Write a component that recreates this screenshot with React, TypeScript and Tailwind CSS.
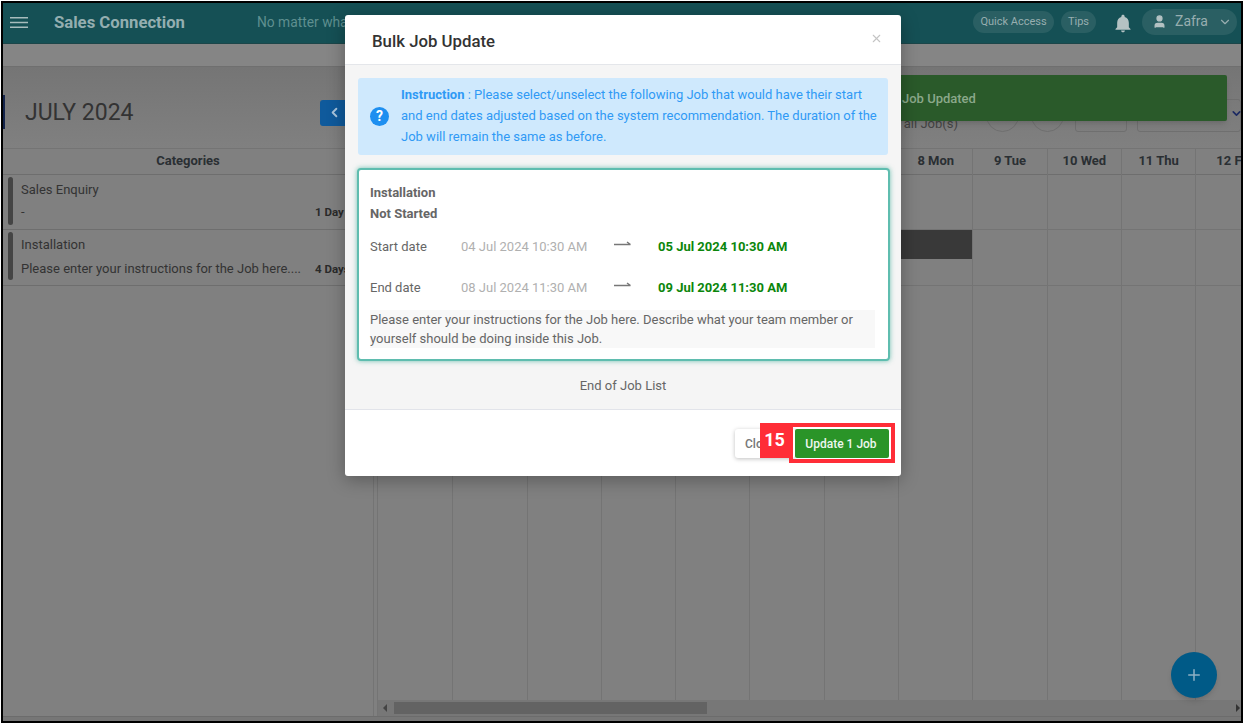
import { ChevronDown, ChevronLeft, Plus, User, X } from "lucide-react"

const days = ["1 Mon", "2 Tue", "3 Wed", "4 Thu", "5 Fri", "6 Sat", "7 Sun", "8 Mon", "9 Tue", "10 Wed", "11 Thu", "12 Fri"]

const Bell = () => (
    <svg viewBox="0 0 24 24" className="w-[20px] h-[22px] fill-[#b4c2c3]">
        <path d="M12 22c1.300 0 2.300-1 2.300-2.200H9.700C9.700 21 10.700 22 12 22zm7-6v-5.500c0-3.400-1.900-6.200-5-7V2.800C14 1.800 13.100 1 12 1s-2 .8-2 1.800v.7c-3.100.8-5 3.600-5 7V16l-2 2v1h18v-1l-2-2z" />
    </svg>
)

const CategoryRow = ({ title, text, days, h, gap }: { title: string; text: string; days: string; h: string; gap: string }) => (
    <div className={`${h} flex border-b border-[#6e6e6e] pl-[5px] pt-[2px]`}>
        <div className="w-[5px] h-[48px] rounded-[3px] bg-[#454545]" />
        <div className="flex-1 pl-[8px] pr-[26px] pt-[3px] text-[13px] text-[#333]">
            <div className="leading-[20px]">{title}</div>
            <div className={`flex justify-between items-center leading-[20px] ${gap}`}>
                <span>{text}</span>
                <span className="w-[32px] text-[11.500px] font-bold text-[#2a2a2a] whitespace-nowrap">{days}</span>
            </div>
        </div>
    </div>
)

const DateRow = ({ label, from, to, h }: { label: string; from: string; to: string; h: string }) => (
    <div className={`${h} flex items-center text-[13px]`}>
        <span className="w-[91px] text-[#666]">{label}</span>
        <span className="w-[153px] text-[#b0b0b0]">{from}</span>
        <span className="w-[44px]">
            <svg viewBox="0 0 18 8" className="w-[18px] h-[8px] -translate-y-[3px] stroke-[#777] fill-none">
                <path d="M0 4.500h16.500M13 2l3.500 2.500" strokeWidth="1.400" />
            </svg>
        </span>
        <span className="font-bold text-[#0b860b]">{to}</span>
    </div>
)

export default function App() {
    return (
        <div className="relative w-[1246px] h-[726px] overflow-hidden bg-white font-['Roboto',sans-serif]">
            <div className="m-[1px] w-[1242px] h-[722px] border-2 border-black bg-[#808080] flex flex-col overflow-hidden">
                {/* HEADER */}
                <header className="h-[41px] shrink-0 bg-[#155055] border-b border-[#1c4649] flex items-center pl-[7px] pr-[4px]">
                    <svg viewBox="0 0 18 11" className="w-[18px] h-[11px] -mt-[2px] stroke-[#a7bcbd]">
                        <path d="M0 .75h18M0 5.500h18M0 10.250h18" strokeWidth="1.500" />
                    </svg>
                    <span className="ml-[26px] text-[16.700px] font-bold text-[#94aeb0] -mt-px">Sales Connection</span>
                    <span className="ml-[72px] text-[13.800px] text-[#5f8f90] whitespace-nowrap -mt-px">No matter what happens</span>
                    <div className="ml-auto flex items-center">
                        <span className="-mt-[2px] h-[22px] w-[81px] rounded-full bg-[#2a5f63] text-[11px] text-[#98aeb0] flex items-center justify-center">Quick Access</span>
                        <span className="-mt-[2px] ml-[7px] h-[22px] w-[35px] rounded-full bg-[#2a5f63] text-[11px] text-[#98aeb0] flex items-center justify-center">Tips</span>
                        <span className="ml-[17px] mt-px"><Bell /></span>
                        <span className="-mt-[3px] ml-[9px] h-[26px] w-[95px] rounded-full bg-[#2a5f63] text-[14px] text-[#98aeb0] flex items-center pl-[10px] gap-[8px]">
                            <User className="w-[15px] h-[15px] fill-[#b4c2c3] text-[#b4c2c3]" />
                            Zafra
                            <ChevronDown className="w-[14px] h-[14px] ml-[2px]" />
                        </span>
                    </div>
                </header>

                <div className="h-[23px] shrink-0 bg-[#858585] border-b border-[#6f6f6f]" />

                {/* TOOLBAR */}
                <div className="relative h-[82px] shrink-0 bg-gradient-to-b from-[#757575] to-[#808080] border-b border-[#747474] flex items-center">
                    <div className="w-[2px] h-[34px] mt-[8px] bg-[#12224a]" />
                    <span className="ml-[20px] mt-[12px] text-[23px] text-[#333]">JULY 2024</span>
                    <button className="ml-[186px] mt-[10px] w-[40px] h-[26px] rounded-[3px] bg-[#0f5a9c] pl-[7px] text-[#a9c4dc]">
                        <ChevronLeft className="w-[15px] h-[15px]" strokeWidth={3} />
                    </button>
                    <div className="ml-auto mt-[15px] flex items-end">
                        <span className="text-[13px] text-[#444] -mb-[2px]">Show all Job(s)</span>
                        <span className="ml-[28px] w-[33px] h-[33px] rounded-full border border-[#6f6f6f]" />
                        <span className="ml-[12px] w-[33px] h-[33px] rounded-full border border-[#6f6f6f]" />
                        <span className="ml-[11px] w-[52px] h-[33px] rounded-[3px] border border-[#6f6f6f]" />
                        <span className="ml-[10px] w-[104px] h-[33px] rounded-[3px] border border-[#6f6f6f]" />
                    </div>
                    <ChevronDown className="absolute -right-[2px] top-[40px] w-[13px] h-[13px] text-[#1c2a62]" strokeWidth={3} />
                </div>

                {/* BODY */}
                <div className="flex-1 flex min-h-0">
                    <div className="w-[371px] shrink-0 border-r border-[#747474]">
                        <div className="h-[26px] pb-[2px] border-b border-[#6e6e6e] flex items-center justify-center text-[13px] font-bold text-[#2a2f33]">Categories</div>
                        <CategoryRow h="h-[55px]" gap="mt-[2px]" title="Sales Enquiry" text="-" days="1 Day" />
                        <CategoryRow h="h-[56px]" gap="mt-[4px]" title="Installation" text="Please enter your instructions for the Job here...." days="4 Days" />
                    </div>
                    <div className="w-[4px] shrink-0 border-r border-[#747474]" />
                    <div className="flex-1 min-w-0 flex flex-col">
                        <div className="flex-1 min-h-0 overflow-hidden flex pl-[1px]">
                            {days.map((day, i) => (
                                <div key={day} className="w-[74.300px] shrink-0 border-r border-[#747474]">
                                    <div className="h-[26px] pb-[2px] border-b border-[#6e6e6e] flex items-center justify-center text-[13px] font-bold text-[#2a2f33] whitespace-nowrap">{day}</div>
                                    <div className="h-[55px] border-b border-[#747474]" />
                                    <div className="h-[56px] border-b border-[#747474]">
                                        {i >= 3 && i <= 7 ? <div className="h-[29px] bg-[#393939]" /> : null}
                                    </div>
                                </div>
                            ))}
                        </div>
                        {/* SCROLLBAR */}
                        <div className="h-[16px] shrink-0 bg-[#777] flex items-center">
                            <span className="ml-[5px] w-0 h-0 border-y-[4px] border-y-transparent border-r-[4px] border-r-[#444]" />
                            <div className="ml-[7px] w-[313px] h-[12px] bg-[#636363]" />
                            <span className="ml-auto mr-[1px] w-0 h-0 border-y-[4px] border-y-transparent border-l-[4px] border-l-[#333]" />
                        </div>
                    </div>
                </div>
                <div className="h-[5px] shrink-0 bg-[#767676] border-t border-[#6c6c6c]" />
            </div>

            {/* TOAST */}
            <div className="absolute left-[840px] top-[75px] w-[387px] h-[46px] rounded-[2px] bg-[#2a5a2a] shadow-md flex items-center pl-[62px] pt-[1px] text-[13px] font-medium text-[#8aa88a]">
                Job Updated
            </div>

            {/* FAB */}
            <div className="absolute left-[1171px] top-[652px] w-[46px] h-[46px] rounded-full bg-[#005a87] shadow-md flex items-center justify-center">
                <Plus className="w-[18px] h-[18px] text-[#8fb0c4]" strokeWidth={2} />
            </div>

            {/* MODAL */}
            <div className="absolute left-[345px] top-[15px] w-[556px] h-[461px] rounded-[3px] bg-white shadow-[0_4px_18px_rgba(0,0,0,0.3)] flex flex-col overflow-hidden">
                <div className="h-[50px] shrink-0 border-b border-[#e4e6ea] flex items-center justify-between pl-[27px] pr-[18px]">
                    <span className="text-[16.800px] font-medium text-[#333] mt-[4px]">Bulk Job Update</span>
                    <X className="w-[13px] h-[13px] text-[#c4c4c4] -mt-[2px]" strokeWidth={2} />
                </div>
                <div className="h-[344px] shrink-0 bg-[#f5f5f5] px-[13px] pt-[13px] flex flex-col">
                    <div className="h-[77px] rounded-[3px] bg-[#cfe9fd] flex items-center pl-[12px] pr-[8px] text-[13px] leading-[20.800px] text-[#2f9af5]">
                        <span className="w-[19px] h-[19px] shrink-0 rounded-full bg-[#1e8ff0] flex items-center justify-center text-[14px] font-bold text-white">?</span>
                        <p className="ml-[12px] pr-[1px]">
                            <span className="font-bold">Instruction</span> : Please select/unselect the following Job that would have their start and end dates adjusted based on the system recommendation. The duration of the Job will remain the same as before.
                        </p>
                    </div>
                    <div className="mt-[13px] -ml-px -mr-[2px] h-[193px] rounded-[4px] border-2 border-[#5fbdaf] bg-white shadow-[0_0_5px_rgba(60,170,150,0.7)] pl-[11px] pt-[12px]">
                        <div className="text-[13px] font-bold leading-[21px] text-[#666]">Installation</div>
                        <div className="text-[13px] font-bold leading-[21px] text-[#666]">Not Started</div>
                        <DateRow h="h-[46px]" label="Start date" from="04 Jul 2024 10:30 AM" to="05 Jul 2024 10:30 AM" />
                        <DateRow h="h-[36px]" label="End date" from="08 Jul 2024 11:30 AM" to="09 Jul 2024 11:30 AM" />
                        <p className="mt-[4px] w-[505px] bg-[#f8f8f8] text-[13px] leading-[19px] text-[#666]">
                            Please enter your instructions for the Job here. Describe what your team member or yourself should be doing inside this Job.
                        </p>
                    </div>
                    <div className="mt-[16px] text-center text-[13px] leading-[18px] text-[#666]">End of Job List</div>
                </div>
                <div className="flex-1 border-t border-[#e2e4ea] flex items-start justify-end pt-[19px] pr-[12px]">
                    <button className="h-[29px] w-[60px] rounded-[3px] bg-white shadow-[0_1px_4px_rgba(0,0,0,0.25)] text-left pl-[10px] text-[12px] font-medium text-[#777]">Close</button>
                    <button className="h-[29px] w-[94px] pr-[2px] rounded-[2px] bg-[#2a9428] text-[12px] font-medium text-[#eef6ee]">Update 1 Job</button>
                </div>
            </div>

            {/* STEP MARKER */}
            <div className="absolute left-[760px] top-[423px] w-[29px] h-[35px] bg-[#ff2d37] flex items-center justify-center pb-[2px] text-[18px] font-bold text-white">15</div>
            <div className="absolute left-[789px] top-[423px] w-[106px] h-[40px] border-4 border-[#ff2d37]" />
        </div>
    )
}
